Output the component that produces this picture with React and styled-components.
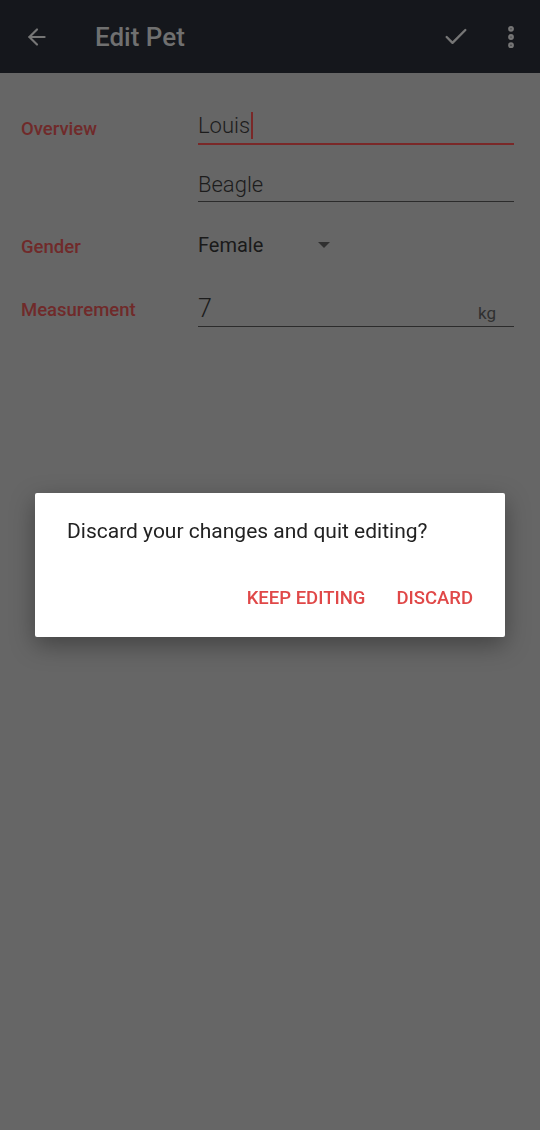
import React from "react";
import styled, { createGlobalStyle } from "styled-components";
import { ArrowLeft, Check, EllipsisVertical } from "lucide-react";

const GlobalStyle = createGlobalStyle`
  html, body {
    margin: 0;
    padding: 0;
    background: #666666;
    font-family: Roboto, "Noto Sans", sans-serif;
  }
`;

// Styled Components
const StyledPage = styled.div`
  min-height: 100vh;
  background: #666666;
  display: flex;
  flex-direction: column;
`;
const StyledToolbar = styled.div`
  height: 73px;
  background: #15171c;
  display: flex;
  align-items: center;
  padding: 0 15px 0 24px;
  color: #767676;
`;
const StyledTitle = styled.div`
  flex: 1;
  margin-left: 45px;
  font-size: 26px;
  font-weight: 500;
  color: #707070;
`;
const StyledIconButton = styled.div`
  display: flex;
  align-items: center;
  justify-content: center;
  margin-left: ${(p) => p.$gap || 0}px;
`;
const StyledForm = styled.div`
  display: grid;
  grid-template-columns: 177px 1fr;
  padding: 0 26px 0 21px;
  margin-top: 34px;
`;
const StyledLabel = styled.div`
  font-size: 18.5px;
  font-weight: 500;
  color: #702a2a;
  padding-top: ${(p) => p.$top || 0}px;
`;
const StyledFieldStack = styled.div`
  display: flex;
  flex-direction: column;
`;
const StyledField = styled.div`
  display: flex;
  align-items: flex-end;
  justify-content: space-between;
  height: ${(p) => p.$height || 36}px;
  margin-top: ${(p) => p.$top || 0}px;
  border-bottom: ${(p) => (p.$active ? "2px solid #7a2828" : "1px solid #2b2b2b")};
  padding-bottom: ${(p) => (p.$active ? 4 : 5)}px;
  box-sizing: border-box;
`;
const StyledValue = styled.span`
  font-size: ${(p) => p.$size || 22}px;
  font-weight: 300;
  color: #1c1c1c;
  line-height: 1;
  display: flex;
  align-items: center;
`;
const StyledCaret = styled.span`
  display: inline-block;
  width: 2px;
  height: 27px;
  background: #7a2828;
  margin-left: 1px;
`;
const StyledUnit = styled.span`
  font-size: 17px;
  color: #303030;
  margin-right: 18px;
  margin-bottom: -2px;
`;
const StyledSpinner = styled.div`
  display: flex;
  align-items: center;
  height: 40px;
  margin-top: 23px;
  font-size: 20px;
  color: #1a1a1a;
`;
const StyledArrow = styled.span`
  width: 0;
  height: 0;
  border-left: 6px solid transparent;
  border-right: 6px solid transparent;
  border-top: 6px solid #303030;
  margin-left: 55px;
`;
const StyledScrim = styled.div`
  position: fixed;
  inset: 0;
  display: flex;
  align-items: center;
  justify-content: center;
`;
const StyledDialog = styled.div`
  width: 470px;
  height: 144px;
  box-sizing: border-box;
  background: #ffffff;
  border-radius: 2px;
  box-shadow: 0 8px 24px rgba(0, 0, 0, 0.35);
  padding: 26px 32px 0 32px;
  display: flex;
  flex-direction: column;
`;
const StyledMessage = styled.div`
  font-size: 21px;
  color: #222222;
`;
const StyledActions = styled.div`
  display: flex;
  justify-content: flex-end;
  gap: 31px;
  margin-top: 44px;
`;
const StyledAction = styled.div`
  font-size: 18.5px;
  font-weight: 500;
  color: #e04848;
`;

function App() {
  return (
    <>
      <GlobalStyle />
      <StyledPage>
        <StyledToolbar>
          <ArrowLeft size={26} strokeWidth={2} />
          <StyledTitle>Edit Pet</StyledTitle>
          <StyledIconButton>
            <Check size={28} strokeWidth={2} />
          </StyledIconButton>
          <StyledIconButton $gap={27}>
            <EllipsisVertical size={28} strokeWidth={3} />
          </StyledIconButton>
        </StyledToolbar>
        <StyledForm>
          <StyledLabel $top={11}>Overview</StyledLabel>
          <StyledFieldStack>
            <StyledField $active $height={38}>
              <StyledValue>
                Louis
                <StyledCaret />
              </StyledValue>
            </StyledField>
            <StyledField $height={40} $top={17}>
              <StyledValue>Beagle</StyledValue>
            </StyledField>
          </StyledFieldStack>
          <StyledLabel $top={34}>Gender</StyledLabel>
          <StyledSpinner>
            Female
            <StyledArrow />
          </StyledSpinner>
          <StyledLabel $top={34}>Measurement</StyledLabel>
          <StyledField $height={44} $top={18}>
            <StyledValue $size={25}>7</StyledValue>
            <StyledUnit>kg</StyledUnit>
          </StyledField>
        </StyledForm>
      </StyledPage>
      <StyledScrim>
        <StyledDialog>
          <StyledMessage>Discard your changes and quit editing?</StyledMessage>
          <StyledActions>
            <StyledAction>KEEP EDITING</StyledAction>
            <StyledAction>DISCARD</StyledAction>
          </StyledActions>
        </StyledDialog>
      </StyledScrim>
    </>
  );
}

export default App;
